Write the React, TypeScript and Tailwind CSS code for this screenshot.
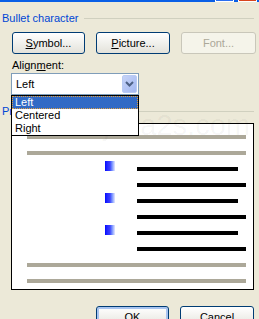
import React from "react";

const font = { fontFamily: '"Liberation Sans", Arial, sans-serif' };

function XPButton({
  label,
  u,
  w,
  disabled,
  isDefault,
}: {
  label: string;
  u?: number;
  w: number;
  disabled?: boolean;
  isDefault?: boolean;
}) {
  const text =
    u === undefined ? (
      label
    ) : (
      <>
        {label.slice(0, u)}
        <span className="underline underline-offset-[1px]">{label[u]}</span>
        {label.slice(u + 1)}
      </>
    );
  return (
    <div
      className={
        "h-[22px] shrink-0 rounded-[3px] border flex items-center justify-center text-[11px] leading-[13px] " +
        (disabled
          ? "border-[#C9C7BA] bg-[#F5F4EA] text-[#ACA899]"
          : "border-[#003C74] bg-gradient-to-b from-[#FFFFFF] to-[#E3E2DA] text-black") +
        (isDefault ? " shadow-[inset_0_0_0_2px_#A8C4F0]" : "")
      }
      style={{ width: w }}
    >
      {text}
    </div>
  );
}

function Bullet() {
  return (
    <div className="w-[10px] h-[10px] shrink-0 bg-gradient-to-r from-[#0000FF] via-[#3D3DFF] to-[#E8E8FF]" />
  );
}

export default function App() {
  return (
    <div
      className="relative w-[259px] h-[319px] overflow-hidden bg-[#ECE9D8] text-black"
      style={font}
    >
      {/* title bar bottom */}
      <div className="flex h-[2px] bg-[#0A5FE6]">
        <div className="ml-[215px] w-[19px] h-[2px] border-x border-b border-white bg-[#2A6EF0]" />
        <div className="ml-[4px] w-[19px] h-[2px] border-x border-b border-white bg-[#D8451E]" />
      </div>

      {/* Bullet character group */}
      <div className="mt-[10px] flex items-center h-[13px] pl-[2px] pr-[5px]">
        <span className="text-[11px] leading-[13px] text-[#0046D5]">Bullet character</span>
        <div className="ml-[6px] flex-1 h-px bg-[#D0D0BF]" />
      </div>

      <div className="mt-[7px] flex pl-[12px] gap-[11px]">
        <XPButton label="Symbol..." u={0} w={73} />
        <XPButton label="Picture..." u={0} w={74} />
        <XPButton label="Font..." w={75} disabled />
      </div>

      <div className="mt-[5px] pl-[12px] h-[13px] text-[11px] leading-[13px]">
        Align<span className="underline underline-offset-[1px]">m</span>ent:
      </div>

      {/* combo box */}
      <div className="mt-[1px] ml-[11px] w-[128px] h-[22px] border border-[#7F9DB9] bg-white flex items-center">
        <span className="pl-[4px] flex-1 text-[11px] leading-[13px]">Left</span>
        <div className="mr-[1px] w-[15px] h-[18px] rounded-[2px] border border-[#B9CBF3] bg-gradient-to-br from-[#C6D3F7] to-[#A3B8F1] flex items-center justify-center">
          <svg width="9" height="6" viewBox="0 0 9 6">
            <path d="M1 1 L4.5 4.5 L8 1" fill="none" stroke="#4D6185" strokeWidth="2" />
          </svg>
        </div>
      </div>

      {/* Preview group */}
      <div className="mt-[10px] flex items-center h-[13px] pl-[2px] pr-[5px]">
        <span className="text-[11px] leading-[13px] text-[#0046D5]">Preview</span>
        <div className="ml-[6px] flex-1 h-px bg-[#D0D0BF]" />
      </div>

      <div className="mt-[5px] ml-[11px] w-[243px] h-[167px] border border-black bg-white pt-[11px] flex flex-col gap-[12px]">
        <div className="ml-[15px] w-[219px] h-[4px] bg-[#ACA899]" />
        <div className="ml-[15px] w-[219px] h-[4px] bg-[#ACA899]" />
        {[0, 1, 2].map((i) => (
          <React.Fragment key={i}>
            <div className="flex items-end h-[4px] pl-[93px]">
              <Bullet />
              <div className="ml-[22px] w-[101px] h-[4px] bg-black" />
            </div>
            <div className="ml-[125px] w-[109px] h-[4px] bg-black" />
          </React.Fragment>
        ))}
        <div className="ml-[15px] w-[219px] h-[4px] bg-[#ACA899]" />
        <div className="ml-[15px] w-[219px] h-[4px] bg-[#ACA899]" />
      </div>

      <div className="mt-[16px] flex pl-[96px] gap-[11px]">
        <XPButton label="OK" w={73} isDefault />
        <XPButton label="Cancel" w={74} />
      </div>

      {/* watermark */}
      <div className="absolute left-[34px] top-[111px] text-[29px] leading-none text-black/[0.045] pointer-events-none whitespace-nowrap">
        www.java2s.com
      </div>

      {/* dropdown list */}
      <div className="absolute left-[11px] top-[95px] w-[128px] h-[41px] border border-black bg-white">
        <div className="h-[13px] bg-[#316AC5] text-white text-[11px] leading-[13px] pl-[3px] outline-1 outline-dotted outline-[#E0A040] -outline-offset-1">
          Left
        </div>
        <div className="h-[13px] text-[11px] leading-[13px] pl-[3px]">Centered</div>
        <div className="h-[13px] text-[11px] leading-[13px] pl-[3px]">Right</div>
      </div>
    </div>
  );
}
